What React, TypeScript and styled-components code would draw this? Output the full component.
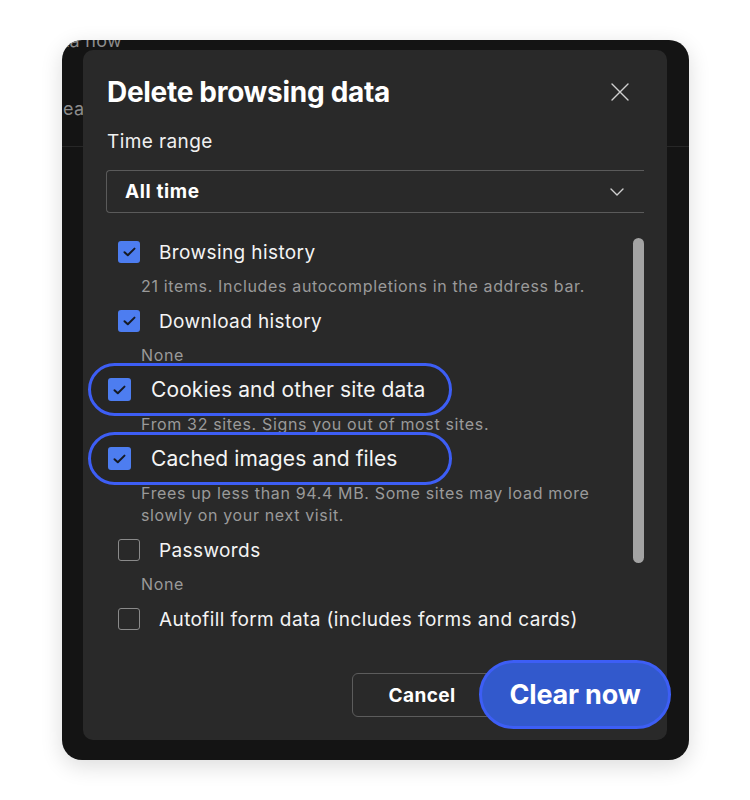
import React from "react";
import styled, { createGlobalStyle } from "styled-components";

const GlobalStyle = createGlobalStyle`
  * {
    box-sizing: border-box;
  }
  body {
    margin: 0;
    background: #ffffff;
    font-family: Inter, "Noto Sans", sans-serif;
    -webkit-font-smoothing: antialiased;
  }
`;

const Page = styled.div`
  width: 750px;
  height: 800px;
  padding: 40px 0 0 62px;
`;

const Frame = styled.div`
  position: relative;
  width: 627px;
  height: 720px;
  background: #141414;
  border-radius: 20px;
  overflow: hidden;
  box-shadow: 0 6px 22px rgba(0, 0, 0, 0.14);
`;

const Backdrop = styled.div`
  display: flex;
  flex-direction: column;
  color: #8c8c8c;
  font-size: 18px;
  letter-spacing: 0.3px;
`;

const BackTop = styled.div`
  width: 60px;
  height: 24px;
  margin-top: -11px;
  line-height: 24px;
  display: flex;
  justify-content: flex-end;
  white-space: nowrap;
`;

const BackRow = styled.div`
  height: 24px;
  margin-top: 44px;
  margin-left: -17px;
  line-height: 24px;
  white-space: nowrap;
`;

const BackDivider = styled.div`
  margin-top: 25px;
  border-bottom: 1px solid #272727;
`;

const Dialog = styled.div`
  position: absolute;
  top: 10px;
  left: 21px;
  right: 22px;
  bottom: 20px;
  background: #292929;
  border-radius: 10px;
  padding: 24px 23px 23px 24px;
  display: flex;
  flex-direction: column;
  color: #f2f2f2;
`;

const Header = styled.div`
  display: flex;
  align-items: center;
  justify-content: space-between;
`;

const Title = styled.h2`
  margin: 0;
  font-size: 28px;
  line-height: 36px;
  font-weight: 700;
  letter-spacing: -0.3px;
  color: #ffffff;
`;

const CloseButton = styled.button`
  width: 32px;
  height: 32px;
  margin-right: 8px;
  padding: 0;
  border: none;
  background: none;
  display: flex;
  align-items: center;
  justify-content: center;
  color: #d0d0d0;
`;

const FieldLabel = styled.div`
  margin-top: 20px;
  font-size: 19px;
  line-height: 24px;
  letter-spacing: 0.4px;
  color: #f0f0f0;
`;

const Select = styled.div`
  margin: 16px 0 0 -1px;
  height: 43px;
  border: 1px solid #5a5a5a;
  border-right: none;
  border-radius: 4px 0 0 4px;
  padding: 0 20px 0 18px;
  display: flex;
  align-items: center;
  justify-content: space-between;
  font-size: 19px;
  font-weight: 700;
  letter-spacing: 0.6px;
  color: #ffffff;
`;

const ListArea = styled.div`
  flex: 1;
  display: flex;
  margin-top: 24px;
  min-height: 0;
`;

const Items = styled.div`
  flex: 1;
  display: flex;
  flex-direction: column;
`;

const Item = styled.div`
  display: flex;
  flex-direction: column;
  margin-bottom: 9px;
`;

const OptionRow = styled.div<{ $highlight?: boolean }>`
  display: flex;
  align-items: center;
  height: ${({ $highlight }) => ($highlight ? "53px" : "30px")};
  font-size: ${({ $highlight }) => ($highlight ? "21px" : "19px")};
  letter-spacing: ${({ $highlight }) => ($highlight ? "0.1px" : "0.4px")};
  color: #f4f4f4;
  white-space: nowrap;
  ${({ $highlight }) =>
    $highlight
      ? `
    width: 364px;
    margin: -12px 0 -11px -19px;
    padding-left: 17px;
    border: 3px solid #3d5ef5;
    border-radius: 27px;
    background: #262626;
    position: relative;
  `
      : `
    padding-left: 11px;
  `}
`;

const Box = styled.span<{ $checked: boolean; $big?: boolean }>`
  flex: none;
  width: ${({ $big }) => ($big ? "23px" : "22px")};
  height: ${({ $big }) => ($big ? "23px" : "22px")};
  border-radius: 3px;
  display: flex;
  align-items: center;
  justify-content: center;
  background: ${({ $checked }) => ($checked ? "#4d7df0" : "transparent")};
  border: ${({ $checked }) => ($checked ? "none" : "1.5px solid #8a8a8a")};
  margin-right: ${({ $big }) => ($big ? "20px" : "19px")};
`;

const Sub = styled.div`
  margin: 8px 28px 0 34px;
  font-size: 16px;
  line-height: 22px;
  letter-spacing: 0.65px;
  color: #9a9a9a;
`;

const Track = styled.div`
  width: 11px;
  flex: none;
`;

const Thumb = styled.div`
  margin-top: 1px;
  height: 325px;
  border-radius: 6px;
  background: #a3a3a3;
`;

const Footer = styled.div`
  display: flex;
  justify-content: flex-end;
  align-items: center;
  gap: 8px;
  height: 44px;
`;

const CancelButton = styled.button`
  width: 140px;
  height: 44px;
  border: 1px solid #5c5c5c;
  border-radius: 6px;
  background: transparent;
  color: #ffffff;
  font-family: inherit;
  font-size: 19px;
  font-weight: 700;
  letter-spacing: 0.4px;
`;

const ClearButton = styled.button`
  position: relative;
  width: 192px;
  height: 69px;
  margin: -13px -27px -12px -21px;
  border: 3px solid #3d5ef5;
  border-radius: 35px;
  background: #3259cc;
  color: #ffffff;
  font-family: inherit;
  font-size: 27px;
  font-weight: 700;
  letter-spacing: -0.2px;
`;

type Option = {
  label: string;
  sub: string;
  checked: boolean;
  highlight?: boolean;
};

const options: Option[] = [
  {
    label: "Browsing history",
    sub: "21 items. Includes autocompletions in the address bar.",
    checked: true,
  },
  { label: "Download history", sub: "None", checked: true },
  {
    label: "Cookies and other site data",
    sub: "From 32 sites. Signs you out of most sites.",
    checked: true,
    highlight: true,
  },
  {
    label: "Cached images and files",
    sub: "Frees up less than 94.4 MB. Some sites may load more slowly on your next visit.",
    checked: true,
    highlight: true,
  },
  { label: "Passwords", sub: "None", checked: false },
  {
    label: "Autofill form data (includes forms and cards)",
    sub: "",
    checked: false,
  },
];

function Check() {
  return (
    <svg width="13" height="10" viewBox="0 0 13 10" fill="none">
      <path
        d="M1.5 5.2 L4.8 8.3 L11.5 1.6"
        stroke="#161a24"
        strokeWidth="2"
        strokeLinecap="round"
        strokeLinejoin="round"
      />
    </svg>
  );
}

export default function App() {
  return (
    <>
      <GlobalStyle />
      <Page>
        <Frame>
          <Backdrop>
            <BackTop>Clear data now</BackTop>
            <BackRow>Clear browsing data</BackRow>
            <BackDivider />
          </Backdrop>
          <Dialog>
            <Header>
              <Title>Delete browsing data</Title>
              <CloseButton aria-label="Close">
                <svg width="18" height="18" viewBox="0 0 18 18">
                  <path
                    d="M1 1 L17 17 M17 1 L1 17"
                    stroke="currentColor"
                    strokeWidth="1.4"
                    strokeLinecap="round"
                  />
                </svg>
              </CloseButton>
            </Header>
            <FieldLabel>Time range</FieldLabel>
            <Select>
              <span>All time</span>
              <svg width="14" height="8" viewBox="0 0 14 8" fill="none">
                <path
                  d="M1 1 L7 7 L13 1"
                  stroke="#cfcfcf"
                  strokeWidth="1.4"
                  strokeLinecap="round"
                  strokeLinejoin="round"
                />
              </svg>
            </Select>
            <ListArea>
              <Items>
                {options.map((o) => (
                  <Item key={o.label}>
                    <OptionRow $highlight={o.highlight}>
                      <Box $checked={o.checked} $big={o.highlight}>
                        {o.checked && <Check />}
                      </Box>
                      {o.label}
                    </OptionRow>
                    {o.sub && <Sub>{o.sub}</Sub>}
                  </Item>
                ))}
              </Items>
              <Track>
                <Thumb />
              </Track>
            </ListArea>
            <Footer>
              <CancelButton>Cancel</CancelButton>
              <ClearButton>Clear now</ClearButton>
            </Footer>
          </Dialog>
        </Frame>
      </Page>
    </>
  );
}
